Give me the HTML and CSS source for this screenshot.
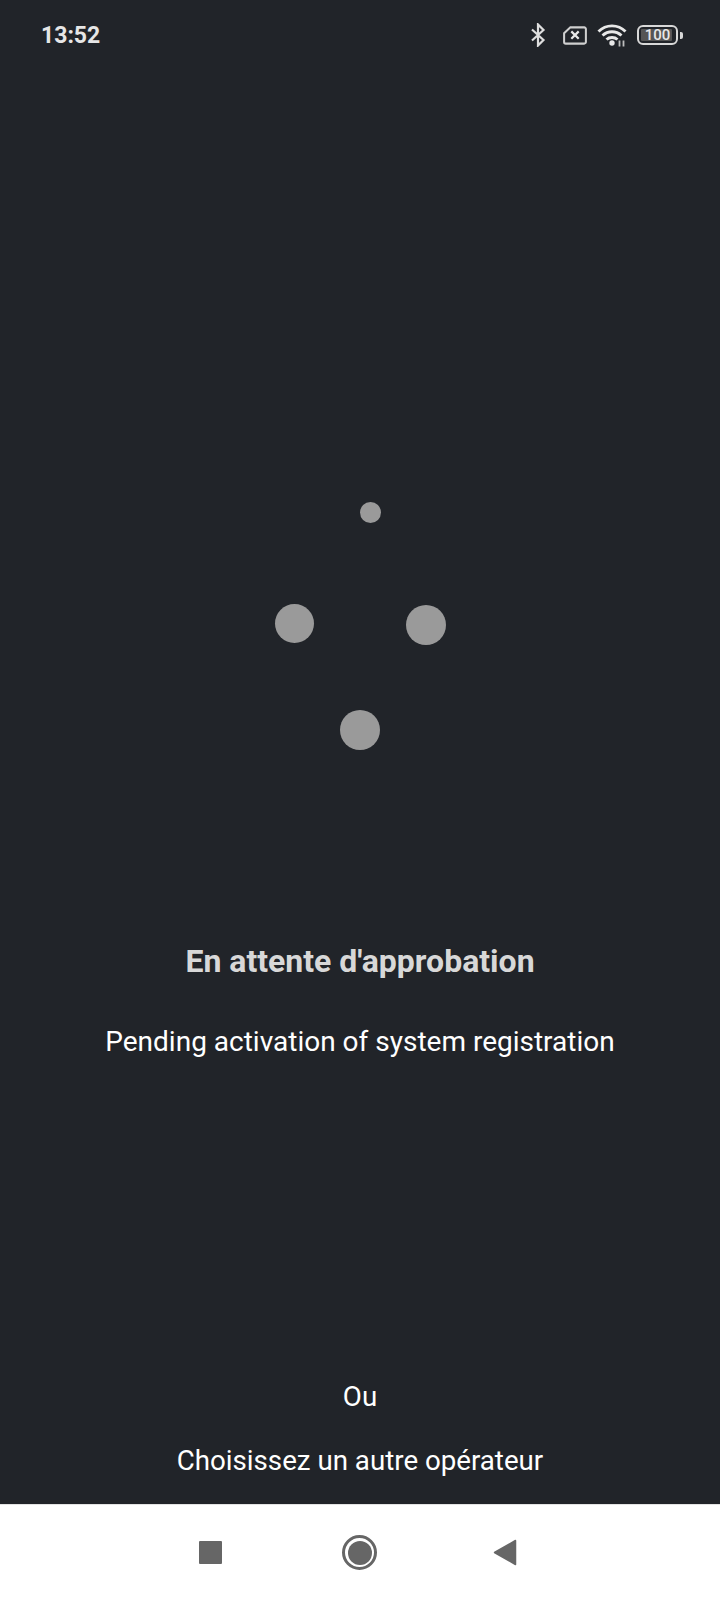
FILE: index.html
```html
<!DOCTYPE html>
<html lang="fr">
<head>
    <meta charset="UTF-8">
    <meta name="viewport" content="width=device-width, initial-scale=1.0">
    <title>En attente d'approbation</title>
    <link rel="stylesheet" href="styles.css">
</head>
<body>
    <div class="screen">
        <header class="status">
            <span class="time">13:52</span>
            <div class="status-icons">
                <svg class="ic-bt" width="16" height="24" viewBox="0 0 16 24">
                    <path d="M2 6.500 13.500 17 8 22.500V1.500L13.500 7 2 17.500" fill="none" stroke="#dedede" stroke-width="2.200"/>
                </svg>
                <svg class="ic-sim" width="24" height="19" viewBox="0 0 26 20">
                    <path d="M8 1.200H23a1.800 1.800 0 0 1 1.800 1.800V17a1.800 1.800 0 0 1-1.800 1.800H3A1.800 1.800 0 0 1 1.200 17V7.500Z" fill="none" stroke="#cfcfcf" stroke-width="2.200"/>
                    <path d="M9 5.500 17 13.500M17 5.500 9 13.500" stroke="#e8e8e8" stroke-width="2.400"/>
                </svg>
                <svg class="ic-wifi" width="30" height="24" viewBox="0 0 30 24">
                    <path d="M1.500 8.500C9 1 21 1 28.500 8.500M5.500 12.500C11 7.500 19 7.500 24.500 12.500M9.500 16.500C12.500 13.800 17.500 13.800 20.500 16.500" fill="none" stroke="#e8e8e8" stroke-width="2.900"/>
                    <circle cx="15" cy="20" r="2.700" fill="#e8e8e8"/>
                    <path d="M22.500 17.500V23.500M26.500 17.500V23.500" stroke="#bdbdbd" stroke-width="1.800"/>
                </svg>
                <div class="battery">
                    <div class="battery-body">
                        <span class="battery-fill"></span>
                        <span class="battery-level">100</span>
                    </div>
                    <span class="battery-nub"></span>
                </div>
            </div>
        </header>

        <main class="content">
            <div class="spinner">
                <span class="dot dot-top"></span>
                <span class="dot dot-left"></span>
                <span class="dot dot-right"></span>
                <span class="dot dot-bottom"></span>
            </div>
            <h1 class="title">En attente d'approbation</h1>
            <p class="subtitle">Pending activation of system registration</p>
            <div class="other">
                <p class="other-line">Ou</p>
                <p class="other-line">Choisissez un autre opérateur</p>
            </div>
        </main>

        <nav class="navbar">
            <span class="nav-square"></span>
            <span class="nav-home"><span class="nav-home-inner"></span></span>
            <svg class="nav-back" width="24" height="27" viewBox="0 0 24 27">
                <path d="M22.500 1.500V25.500L1.500 13.500Z" fill="#666" stroke="#666" stroke-width="1.500" stroke-linejoin="round"/>
            </svg>
        </nav>
    </div>
</body>
</html>
```

FILE: styles.css
```css
body{
    margin: 0;
    padding: 0;
    background-color: #212429;
    font-family: Roboto, "Liberation Sans", sans-serif;
    color: white;
}
.screen{
    width: 720px;
    height: 1600px;
    display: flex;
    flex-direction: column;
    overflow: hidden;
}

/* status bar */
.status{
    height: 70px;
    flex-shrink: 0;
    display: flex;
    align-items: center;
    justify-content: space-between;
    padding: 0 37px 0 41px;
    box-sizing: border-box;
}
.time{
    font-size: 23px;
    font-weight: 700;
    color: #e6e6e6;
}
.status-icons{
    display: flex;
    align-items: center;
    gap: 10px;
}
.ic-bt{
    margin-right: 7px;
}
.battery{
    display: flex;
    align-items: center;
    gap: 2px;
}
.battery-body{
    position: relative;
    width: 41px;
    height: 20px;
    box-sizing: border-box;
    border: 2.500px solid #d8d8d8;
    border-radius: 6px;
    display: flex;
    align-items: center;
    justify-content: center;
}
.battery-fill{
    position: absolute;
    left: 2px;
    top: 2px;
    bottom: 2px;
    width: 31px;
    background-color: #555;
    border-radius: 1px;
}
.battery-level{
    position: relative;
    font-size: 15px;
    font-weight: 500;
    line-height: 15px;
    color: #e8e8e8;
}
.battery-nub{
    width: 3px;
    height: 7px;
    background-color: #d8d8d8;
    border-radius: 0 2px 2px 0;
}

/* main part */
.content{
    flex: 1;
    display: flex;
    flex-direction: column;
    align-items: center;
    text-align: center;
}
.spinner{
    position: relative;
    width: 200px;
    height: 280px;
    margin-top: 420px;
    flex-shrink: 0;
}
.dot{
    position: absolute;
    width: 40px;
    height: 40px;
    border-radius: 50%;
    background-color: #9a9a9a;
}
.dot-top{
    left: 100px;
    top: 12px;
    width: 21px;
    height: 21px;
}
.dot-left{
    left: 15px;
    top: 114px;
    width: 39px;
    height: 39px;
}
.dot-right{
    left: 146px;
    top: 115px;
}
.dot-bottom{
    left: 80px;
    top: 220px;
}
.title{
    margin: 0;
    margin-top: 169px;
    font-size: 32px;
    line-height: 44px;
    font-weight: 700;
    color: #d8d8d8;
}
.subtitle{
    margin: 0;
    margin-top: 37px;
    font-size: 28px;
    line-height: 44px;
}
.other{
    margin-top: auto;
    margin-bottom: 21px;
    display: flex;
    flex-direction: column;
    gap: 20px;
}
.other-line{
    margin: 0;
    font-size: 27.700px;
    line-height: 44px;
}

/* bottom nav */
.navbar{
    height: 96px;
    flex-shrink: 0;
    background-color: white;
    border-top: 1px solid #e3e3e3;
    box-sizing: border-box;
    display: flex;
    align-items: center;
    justify-content: center;
    gap: 116px;
    padding-right: 4px;
}
.nav-square{
    width: 23px;
    height: 23px;
    margin-right: 4px;
    border-radius: 1px;
    background-color: #666;
}
.nav-home{
    width: 35px;
    height: 35px;
    box-sizing: border-box;
    border: 3px solid #666;
    border-radius: 50%;
    display: flex;
    align-items: center;
    justify-content: center;
}
.nav-home-inner{
    width: 24px;
    height: 24px;
    border-radius: 50%;
    background-color: #666;
}
```
